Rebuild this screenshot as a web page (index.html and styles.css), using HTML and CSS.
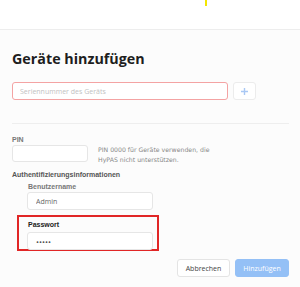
FILE: index.html
```html
<!DOCTYPE html>
<html lang="de">
<head>
  <meta charset="UTF-8" />
  <meta name="viewport" content="width=device-width, initial-scale=1.0"/>
  <title>Geräte hinzufügen</title>
  <link rel="stylesheet" href="styles.css">
</head>
<body>
  <div class="topbar">
    <span class="mark"></span>
  </div>

  <div class="dialog">
    <h1>Geräte hinzufügen</h1>

    <div class="serial-row">
      <input class="field serial" type="text" placeholder="Seriennummer des Geräts">
      <button class="plus-btn">
        <svg width="9" height="9" viewBox="0 0 9 9"><path d="M4.5 1v7M1 4.5h7" stroke="#a9c8f4" stroke-width="1.4" fill="none"/></svg>
      </button>
    </div>

    <div class="divider"></div>

    <div class="label">PIN</div>
    <div class="pin-row">
      <input class="field pin" type="text">
      <p class="hint">PIN 0000 für Geräte verwenden, die<br>HyPAS nicht unterstützen.</p>
    </div>

    <div class="label strong">Authentifizierungsinformationen</div>
    <div class="auth">
      <div class="label sub">Benutzername</div>
      <input class="field user" type="text" value="Admin">
      <div class="highlight">
        <div class="label sub dark">Passwort</div>
        <input class="field user" type="password" value="admin">
      </div>
    </div>

    <div class="actions">
      <button class="btn cancel">Abbrechen</button>
      <button class="btn add">Hinzufügen</button>
    </div>
  </div>
</body>
</html>
```

FILE: styles.css
```css
body {
  margin: 0;
  background: #fcfcfc;
  font-family: 'DejaVu Sans', Verdana, sans-serif;
  color: #333;
}

.topbar {
  height: 29px;
  background: #ffffff;
  border-bottom: 1px solid #ededed;
}

.mark {
  display: block;
  width: 2px;
  height: 6px;
  margin-left: 205px;
  background: #f2e600;
}

.dialog {
  padding: 20px 11px 0 12px;
}

h1 {
  margin: 0;
  font-family: 'Open Sans', sans-serif;
  font-size: 14.3px;
  font-weight: bold;
  color: #1e1e1e;
  line-height: 18px;
}

.field {
  box-sizing: border-box;
  background: #ffffff;
  border: 1px solid #e6e6e6;
  border-radius: 3px;
  font-family: 'Open Sans', sans-serif;
  font-size: 7px;
  color: #666;
  outline: none;
}

.serial-row {
  display: flex;
  gap: 5px;
  margin-top: 14px;
}

.serial {
  width: 216px;
  height: 18px;
  padding: 0 7px;
  border-color: #f4a3a3;
}

.serial::placeholder {
  color: #c2c2c2;
}

.plus-btn {
  width: 23px;
  height: 18px;
  padding: 0;
  border: 1px solid #ececec;
  border-radius: 3px;
  background: #ffffff;
  display: flex;
  align-items: center;
  justify-content: center;
}

.divider {
  width: 277px;
  margin-top: 23px;
  border-top: 1px solid #eeeeee;
}

.label {
  font-family: 'Liberation Sans', Arial, sans-serif;
  font-size: 7px;
  font-weight: bold;
  color: #777;
  line-height: 9px;
}

.divider + .label {
  margin-top: 11px;
}

.pin-row {
  display: flex;
  gap: 10px;
  margin-top: 1px;
}

.pin {
  width: 76px;
  height: 17px;
}

.hint {
  margin: 0;
  font-size: 6.2px;
  line-height: 10px;
  color: #888;
}

.label.strong {
  margin-top: 5px;
  color: #555;
}

.auth {
  margin-left: 5px;
}

.label.sub {
  margin-left: 11px;
  margin-top: 3px;
}

.user {
  display: block;
  width: 126px;
  height: 18px;
  margin: 1px 0 0 10px;
  padding: 0 8px;
}

.highlight {
  width: 138px;
  height: 32px;
  margin-top: 5px;
  border: 2px solid #e12626;
}

.highlight .label.sub {
  margin-left: 9px;
  margin-top: 3px;
}

.highlight .user {
  margin-left: 8px;
  margin-top: 3px;
  font-size: 8px;
  color: #555;
}

.label.dark {
  color: #222;
}

.actions {
  display: flex;
  justify-content: flex-end;
  gap: 5px;
  margin-top: 8px;
}

.btn {
  height: 18px;
  padding: 0;
  border-radius: 3px;
  font-family: 'Open Sans', sans-serif;
  font-size: 7px;
}

.cancel {
  width: 53px;
  background: #ffffff;
  border: 1px solid #e4e4e4;
  color: #444;
}

.add {
  width: 54px;
  background: #94c0f6;
  border: 1px solid #94c0f6;
  color: #ffffff;
}
```
